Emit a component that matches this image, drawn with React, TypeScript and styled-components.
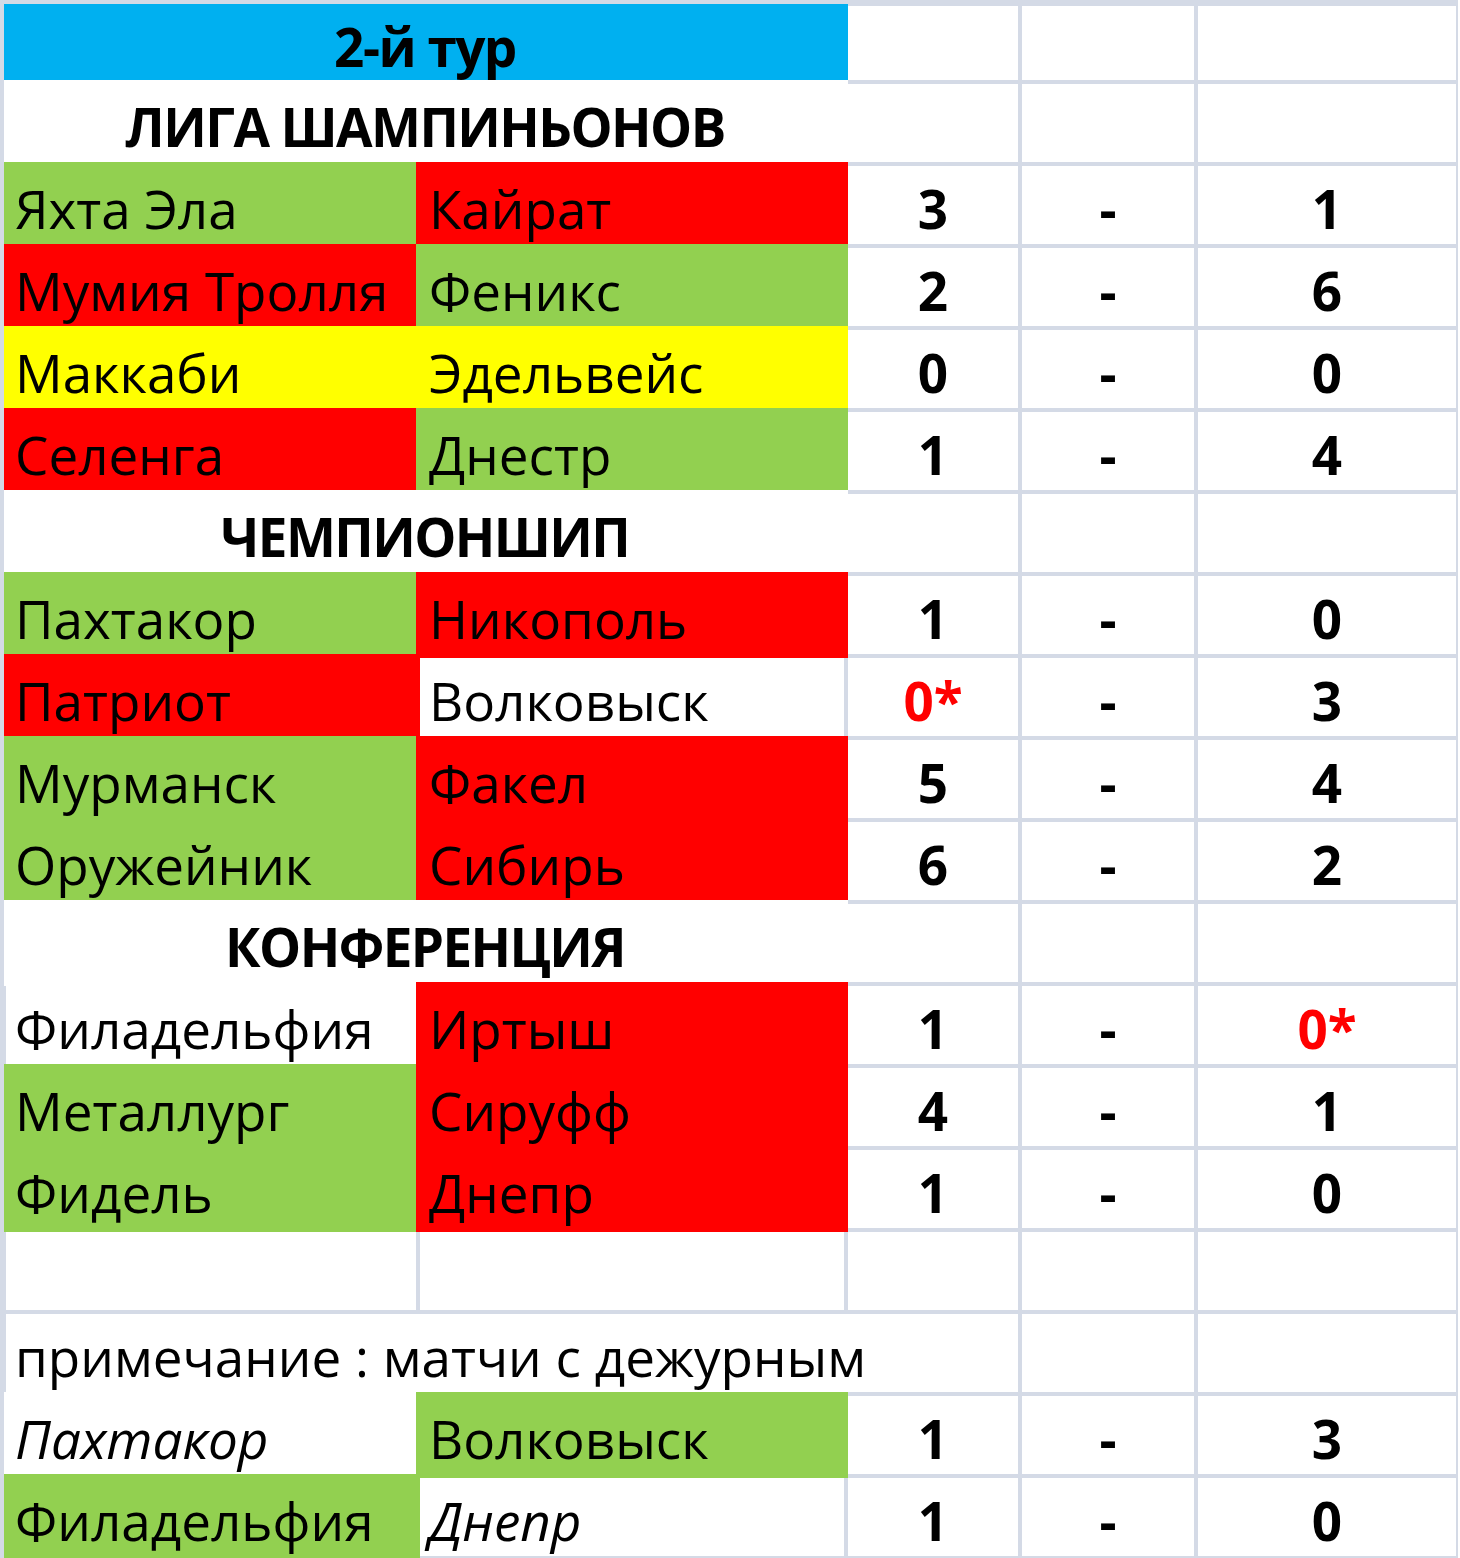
import React from "react";
import styled, { createGlobalStyle, css } from "styled-components";

const GRID = "#d4dae6";
const BLUE = "#00b0f0";
const GREEN = "#92d050";
const RED = "#ff0000";
const YELLOW = "#ffff00";
const WHITE = "#ffffff";

const Global = createGlobalStyle`
  html, body {
    margin: 0;
    padding: 0;
    background: #ffffff;
    overflow: hidden;
  }
  body {
    font-family: "Open Sans", "Noto Sans", "DejaVu Sans", sans-serif;
    color: #000;
  }
`;

const Sheet = styled.div`
  display: grid;
  grid-template-columns: 414px 428px 174px 176px 262px;
  grid-template-rows: 78px repeat(18, 82px);
  width: 1454px;
  border-top: 4px solid ${GRID};
  border-left: 4px solid ${GRID};
  overflow: hidden;
  background: #ffffff;
`;

const baseCell = css<{ $fill?: string }>`
  box-sizing: border-box;
  border: 2px solid ${(p) => p.$fill ?? GRID};
  background: ${(p) => p.$fill ?? "#ffffff"};
  display: flex;
  align-items: flex-end;
  min-width: 0;
  font-size: 53px;
  line-height: 1;
  padding-bottom: 9px;
  white-space: nowrap;
  ${(p) =>
    p.$fill &&
    css`
      position: relative;
      z-index: 1;
      box-shadow: 0 0 0 2px ${p.$fill};
    `}
`;

const TitleCell = styled.div<{ $fill?: string }>`
  ${baseCell};
  grid-column: span 2;
  justify-content: center;
  font-weight: 700;
  letter-spacing: -1.5px;
  padding-bottom: 7px;
`;

const SectionCell = styled.div<{ $fill?: string }>`
  ${baseCell};
  grid-column: span 2;
  justify-content: center;
  font-weight: 700;
  letter-spacing: -1.6px;
`;

const TeamCell = styled.div<{ $fill?: string; $italic?: boolean }>`
  ${baseCell};
  padding-left: 9px;
  font-style: ${(p) => (p.$italic ? "italic" : "normal")};
`;

const ScoreCell = styled.div<{ $fill?: string; $red?: boolean }>`
  ${baseCell};
  justify-content: center;
  font-weight: 700;
  color: ${(p) => (p.$red ? RED : "#000")};
`;

const DashCell = styled.div<{ $fill?: string }>`
  ${baseCell};
  justify-content: center;
  font-weight: 700;
`;

const BlankCell = styled.div<{ $fill?: string }>`
  ${baseCell};
`;

const NoteCell = styled.div<{ $fill?: string }>`
  ${baseCell};
  grid-column: span 3;
  padding-left: 9px;
`;

type Team = { name: string; fill?: string; italic?: boolean };
type Row =
  | { kind: "title"; text: string }
  | { kind: "section"; text: string }
  | { kind: "match"; home: Team; away: Team; h: string; a: string; hRed?: boolean; aRed?: boolean }
  | { kind: "empty" }
  | { kind: "note"; text: string };

const rows: Row[] = [
  { kind: "title", text: "2-й тур" },
  { kind: "section", text: "ЛИГА ШАМПИНЬОНОВ" },
  { kind: "match", home: { name: "Яхта Эла", fill: GREEN }, away: { name: "Кайрат", fill: RED }, h: "3", a: "1" },
  { kind: "match", home: { name: "Мумия Тролля", fill: RED }, away: { name: "Феникс", fill: GREEN }, h: "2", a: "6" },
  { kind: "match", home: { name: "Маккаби", fill: YELLOW }, away: { name: "Эдельвейс", fill: YELLOW }, h: "0", a: "0" },
  { kind: "match", home: { name: "Селенга", fill: RED }, away: { name: "Днестр", fill: GREEN }, h: "1", a: "4" },
  { kind: "section", text: "ЧЕМПИОНШИП" },
  { kind: "match", home: { name: "Пахтакор", fill: GREEN }, away: { name: "Никополь", fill: RED }, h: "1", a: "0" },
  { kind: "match", home: { name: "Патриот", fill: RED }, away: { name: "Волковыск" }, h: "0*", a: "3", hRed: true },
  { kind: "match", home: { name: "Мурманск", fill: GREEN }, away: { name: "Факел", fill: RED }, h: "5", a: "4" },
  { kind: "match", home: { name: "Оружейник", fill: GREEN }, away: { name: "Сибирь", fill: RED }, h: "6", a: "2" },
  { kind: "section", text: "КОНФЕРЕНЦИЯ" },
  { kind: "match", home: { name: "Филадельфия" }, away: { name: "Иртыш", fill: RED }, h: "1", a: "0*", aRed: true },
  { kind: "match", home: { name: "Металлург", fill: GREEN }, away: { name: "Сируфф", fill: RED }, h: "4", a: "1" },
  { kind: "match", home: { name: "Фидель", fill: GREEN }, away: { name: "Днепр", fill: RED }, h: "1", a: "0" },
  { kind: "empty" },
  { kind: "note", text: "примечание : матчи с дежурным" },
  { kind: "match", home: { name: "Пахтакор", italic: true, fill: WHITE }, away: { name: "Волковыск", fill: GREEN }, h: "1", a: "3" },
  { kind: "match", home: { name: "Филадельфия", fill: GREEN }, away: { name: "Днепр", italic: true }, h: "1", a: "0" },
];

function renderRow(r: Row, i: number) {
  switch (r.kind) {
    case "title":
      return [
        <TitleCell key={`${i}-t`} $fill={BLUE}>{r.text}</TitleCell>,
        <BlankCell key={`${i}-c`} />,
        <BlankCell key={`${i}-d`} />,
        <BlankCell key={`${i}-e`} />,
      ];
    case "section":
      return [
        <SectionCell key={`${i}-t`} $fill={WHITE}>{r.text}</SectionCell>,
        <BlankCell key={`${i}-c`} />,
        <BlankCell key={`${i}-d`} />,
        <BlankCell key={`${i}-e`} />,
      ];
    case "match":
      return [
        <TeamCell key={`${i}-a`} $fill={r.home.fill} $italic={r.home.italic}>{r.home.name}</TeamCell>,
        <TeamCell key={`${i}-b`} $fill={r.away.fill} $italic={r.away.italic}>{r.away.name}</TeamCell>,
        <ScoreCell key={`${i}-c`} $red={r.hRed}>{r.h}</ScoreCell>,
        <DashCell key={`${i}-d`}>-</DashCell>,
        <ScoreCell key={`${i}-e`} $red={r.aRed}>{r.a}</ScoreCell>,
      ];
    case "empty":
      return [0, 1, 2, 3, 4].map((k) => <BlankCell key={`${i}-${k}`} />);
    case "note":
      return [
        <NoteCell key={`${i}-n`}>{r.text}</NoteCell>,
        <BlankCell key={`${i}-d`} />,
        <BlankCell key={`${i}-e`} />,
      ];
  }
}

export default function App() {
  return (
    <>
      <Global />
      <Sheet>{rows.map((r, i) => renderRow(r, i))}</Sheet>
    </>
  );
}
